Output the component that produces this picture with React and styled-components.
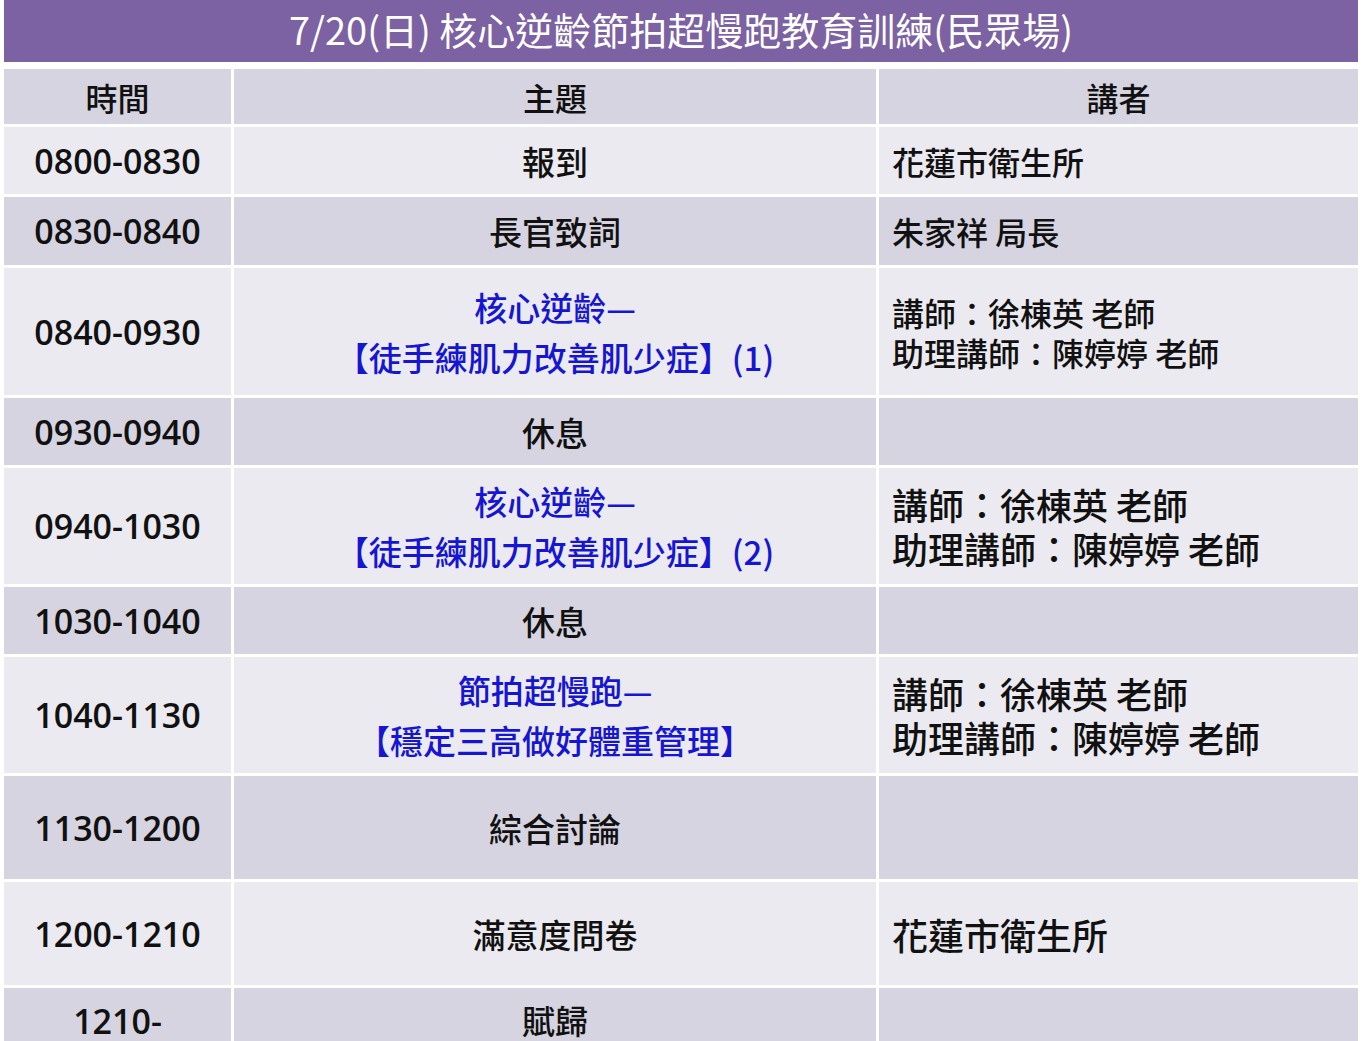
import styled, { createGlobalStyle } from "styled-components";

const GlobalStyle = createGlobalStyle`
  html, body {
    margin: 0;
    padding: 0;
    background: #ffffff;
  }
  body {
    font-family: "Noto Sans CJK TC", "Noto Sans", sans-serif;
  }
`;

const schedule = [
  { time: "0800-0830", topic: ["報到"], speaker: ["花蓮市衛生所"], height: 67, tone: "light" },
  { time: "0830-0840", topic: ["長官致詞"], speaker: ["朱家祥 局長"], height: 68, tone: "dark" },
  {
    time: "0840-0930",
    topic: ["核心逆齡—", "【徒手練肌力改善肌少症】(1)"],
    highlight: true,
    speaker: ["講師：徐棟英 老師", "助理講師：陳婷婷 老師"],
    height: 127,
    tone: "light",
  },
  { time: "0930-0940", topic: ["休息"], speaker: [], height: 67, tone: "dark" },
  {
    time: "0940-1030",
    topic: ["核心逆齡—", "【徒手練肌力改善肌少症】(2)"],
    highlight: true,
    speaker: ["講師：徐棟英 老師", "助理講師：陳婷婷 老師"],
    big: true,
    height: 116,
    tone: "light",
  },
  { time: "1030-1040", topic: ["休息"], speaker: [], height: 67, tone: "dark" },
  {
    time: "1040-1130",
    topic: ["節拍超慢跑—", "【穩定三高做好體重管理】"],
    highlight: true,
    speaker: ["講師：徐棟英 老師", "助理講師：陳婷婷 老師"],
    big: true,
    height: 116,
    tone: "light",
  },
  { time: "1130-1200", topic: ["綜合討論"], speaker: [], height: 103, tone: "dark" },
  { time: "1200-1210", topic: ["滿意度問卷"], speaker: ["花蓮市衛生所"], big: true, height: 103, tone: "light" },
  { time: "1210-", topic: ["賦歸"], speaker: [], height: 66, tone: "dark", top: true },
];

function App() {
  return (
    <>
      <GlobalStyle />
      <Page>
        <TitleBar>7/20(日) 核心逆齡節拍超慢跑教育訓練(民眾場)</TitleBar>
        <Table>
          <HeadCell>時間</HeadCell>
          <HeadCell>主題</HeadCell>
          <HeadCell>講者</HeadCell>
          {schedule.map((row) => (
            <Row key={row.time} $height={row.height}>
              <TimeCell $tone={row.tone} $top={row.top}>
                {row.time}
              </TimeCell>
              <TopicCell $tone={row.tone} $highlight={row.highlight} $top={row.top}>
                {row.topic.map((line) => (
                  <span key={line}>{line}</span>
                ))}
              </TopicCell>
              <SpeakerCell $tone={row.tone} $big={row.big}>
                {row.speaker.map((line) => (
                  <span key={line}>{line}</span>
                ))}
              </SpeakerCell>
            </Row>
          ))}
        </Table>
      </Page>
    </>
  );
}

export default App;

const Page = styled.div`
  width: 1362px;
  height: 1041px;
  overflow: hidden;
  padding: 0 4px 0 4px;
  box-sizing: border-box;
`;

const TitleBar = styled.div`
  height: 62px;
  background-color: #7c62a3;
  color: #ffffff;
  font-size: 38px;
  font-weight: 400;
  line-height: 1;
  display: flex;
  align-items: center;
  justify-content: center;
  padding-bottom: 4px;
  box-sizing: border-box;
`;

const Table = styled.div`
  display: grid;
  grid-template-columns: 227px 642px 479px;
  grid-auto-rows: auto;
  column-gap: 3px;
  row-gap: 3px;
  margin-top: 7px;
`;

const HeadCell = styled.div`
  height: 55px;
  background-color: #d6d4e0;
  display: flex;
  align-items: center;
  justify-content: center;
  font-size: 32px;
  font-weight: 500;
  color: #111111;
`;

const Row = styled.div`
  display: contents;
  & > div {
    height: ${(p) => p.$height}px;
  }
`;

const Cell = styled.div`
  background-color: ${(p) => (p.$tone === "dark" ? "#d6d4e0" : "#ebeaf0")};
  display: flex;
  flex-direction: column;
  justify-content: ${(p) => (p.$top ? "flex-start" : "center")};
  color: #111111;
  font-weight: 500;
  box-sizing: border-box;
`;

const TimeCell = styled(Cell)`
  align-items: center;
  font-family: "Open Sans", "Noto Sans CJK TC", sans-serif;
  font-size: 34px;
  font-weight: 600;
  padding-top: ${(p) => (p.$top ? "10px" : "0")};
`;

const TopicCell = styled(Cell)`
  align-items: center;
  font-size: 33px;
  line-height: 50px;
  color: ${(p) => (p.$highlight ? "#1616d2" : "#111111")};
  padding-top: ${(p) => (p.$top ? "7px" : "0")};
`;

const SpeakerCell = styled(Cell)`
  align-items: flex-start;
  padding-left: 13px;
  font-size: ${(p) => (p.$big ? "36px" : "32px")};
  line-height: ${(p) => (p.$big ? "44px" : "40px")};
  white-space: pre;
`;
